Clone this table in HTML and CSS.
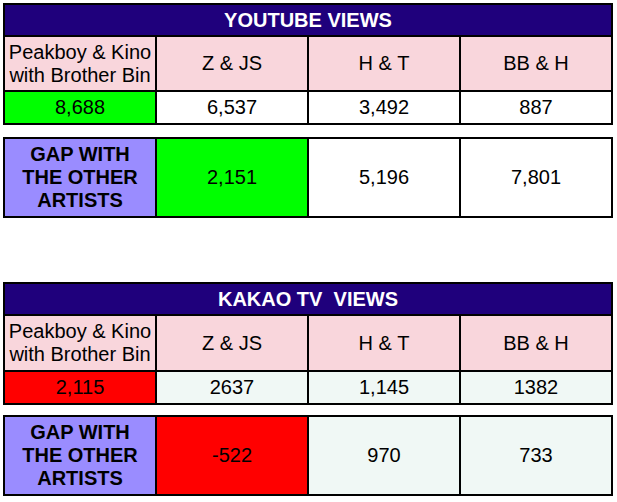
FILE: index.html
```html
<!DOCTYPE html>
<html>
<head>
<meta charset="utf-8">
<link rel="stylesheet" href="styles.css">
</head>
<body>
<div class="page">
  <div class="grid views yt">
    <div class="title">YOUTUBE VIEWS</div>
    <div class="cell head">Peakboy &amp; Kino<br>with Brother Bin</div>
    <div class="cell head">Z &amp; JS</div>
    <div class="cell head">H &amp; T</div>
    <div class="cell head">BB &amp; H</div>
    <div class="cell green">8,688</div>
    <div class="cell white">6,537</div>
    <div class="cell white">3,492</div>
    <div class="cell white">887</div>
  </div>
  <div class="grid gap first-gap">
    <div class="cell label">GAP WITH<br>THE OTHER<br>ARTISTS</div>
    <div class="cell green">2,151</div>
    <div class="cell white">5,196</div>
    <div class="cell white">7,801</div>
  </div>

  <div class="grid views kakao">
    <div class="title">KAKAO TV&nbsp; VIEWS</div>
    <div class="cell head">Peakboy &amp; Kino<br>with Brother Bin</div>
    <div class="cell head">Z &amp; JS</div>
    <div class="cell head">H &amp; T</div>
    <div class="cell head">BB &amp; H</div>
    <div class="cell red">2,115</div>
    <div class="cell mint">2637</div>
    <div class="cell mint">1,145</div>
    <div class="cell mint">1382</div>
  </div>
  <div class="grid gap second-gap">
    <div class="cell label">GAP WITH<br>THE OTHER<br>ARTISTS</div>
    <div class="cell red">-522</div>
    <div class="cell mint">970</div>
    <div class="cell mint">733</div>
  </div>
</div>
</body>
</html>
```

FILE: styles.css
```css
html, body {
  margin: 0;
  padding: 0;
  background: #ffffff;
}

.page {
  padding: 3px 0 0 3px;
  width: 610px;
  font-family: "Liberation Sans", Arial, sans-serif;
  font-size: 20px;
  color: #000;
}

.grid {
  display: grid;
  grid-template-columns: repeat(4, 1fr);
  gap: 2px;
  padding: 2px;
  background: #000;
}

.yt {
  grid-template-rows: 30px 53px 31px;
}

.kakao {
  grid-template-rows: 30px 54px 31px;
  margin-top: 64px;
}

.gap {
  grid-template-rows: 77px;
}

.first-gap {
  margin-top: 12px;
}

.second-gap {
  margin-top: 10px;
}

.title {
  grid-column: 1 / -1;
  background: #1f007c;
  color: #fff;
  font-weight: bold;
  display: flex;
  align-items: center;
  justify-content: center;
  padding-top: 1px;
}

.cell {
  display: flex;
  align-items: center;
  justify-content: center;
  text-align: center;
  line-height: 23px;
}

.head {
  background: #f9d6dc;
  line-height: 23px;
}

.green { background: #00ff00; }
.white { background: #ffffff; }
.red { background: #ff0000; }
.mint { background: #f0f8f5; }

.label {
  background: #9a8cff;
  font-weight: bold;
}
```
